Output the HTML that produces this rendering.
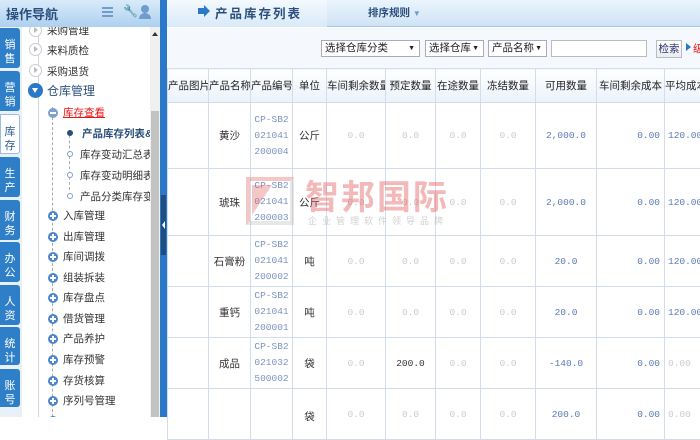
<!DOCTYPE html>
<html><head><meta charset="utf-8"><style>
*{margin:0;padding:0;box-sizing:border-box}
body{width:700px;height:417px;overflow:hidden;background:#fff;font-family:"Liberation Sans","Noto Sans CJK SC",sans-serif;font-size:11px;position:relative;color:#333}
.a{position:absolute;white-space:nowrap}
.tab{position:absolute;left:0;width:20px;background:#2f7fc8;color:#fff;font-size:11px;text-align:center;line-height:14px;padding-top:10px;border-radius:0 3px 3px 0}
.plus{position:absolute;width:10px;height:10px;border-radius:50%;background:#4a87cc}
.plus:after{content:"";position:absolute;left:2px;top:4px;width:6px;height:2px;background:#fff}
.plus:before{content:"";position:absolute;left:4px;top:2px;width:2px;height:6px;background:#fff}
.play{position:absolute;width:13px;height:13px;border-radius:50%;border:1.5px solid #c8ccd6;background:#fff}
.play:after{content:"";position:absolute;left:4px;top:2px;border-left:4px solid #bbb;border-top:3px solid transparent;border-bottom:3px solid transparent}
table{border-collapse:collapse;table-layout:fixed}
td,th{border:1px solid #d3dceb;text-align:center;overflow:hidden;white-space:nowrap}
th{font-size:10.5px;font-weight:normal;color:#222;background:linear-gradient(#fff,#eaf2fb);height:34px}
td{font-family:"Liberation Mono","Noto Sans CJK SC",monospace;font-size:9.5px;color:#ccc}
td.b{color:#5c7bb3}
td.n{font-family:"Liberation Sans","Noto Sans CJK SC",sans-serif;font-size:10.5px;color:#333}
td.code{line-height:16px;color:#7b93c0}
td.r{text-align:right;padding-right:4px}
td.l{text-align:left;padding-left:3px}
.sel{position:absolute;top:40px;height:17px;border:1px solid #aab;background:#fff;font-size:10.5px;line-height:15px;padding-left:3px;color:#222}
.sel span{position:absolute;right:4px;font-size:7px}
</style></head><body>
<div class="a" style="left:0;top:0;width:160px;height:27px;background:linear-gradient(#d9ebfa,#aed0ef);"></div>
<div class="a" style="left:6px;top:4px;font-size:13px;color:#2b4f7c;font-weight:bold">操作导航</div>
<div class="a" style="left:102px;top:7px;width:11px;height:10px;border-top:2px solid #6f9ccc;border-bottom:2px solid #6f9ccc"></div>
<div class="a" style="left:102px;top:11px;width:11px;height:2px;background:#6f9ccc"></div>
<div class="a" style="left:123px;top:4px;font-size:12px;color:#6f9ccc">🔧</div>
<div class="a" style="left:141px;top:5px;width:8px;height:8px;border-radius:50%;background:#6f9ccc"></div>
<div class="a" style="left:139px;top:13px;width:12px;height:6px;border-radius:6px 6px 0 0;background:#6f9ccc"></div>
<div class="a" style="left:0;top:27px;width:22px;height:390px;background:#e8f0f8"></div>
<div class="tab" style="top:28px;height:40px">销<br>售</div>
<div class="tab" style="top:71px;height:40px">营<br>销</div>
<div class="tab" style="top:114px;height:40px;background:#fff;color:#2b5a95;border:1px solid #9bbde0">库<br>存</div>
<div class="tab" style="top:157px;height:40px">生<br>产</div>
<div class="tab" style="top:200px;height:40px">财<br>务</div>
<div class="tab" style="top:242px;height:40px">办<br>公</div>
<div class="tab" style="top:285px;height:40px">人<br>资</div>
<div class="tab" style="top:327px;height:38px">统<br>计</div>
<div class="tab" style="top:369px;height:38px">账<br>号</div>
<div class="a" style="left:22px;top:27px;width:128px;height:390px;background:#fff;overflow:hidden">
 <div class="a" style="left:16px;top:0;width:1px;height:390px;background:#cfd6e0"></div>
 <div class="a" style="left:30px;top:80px;width:0;height:330px;border-left:1px dashed #aaa"></div>
 <div class="a" style="left:47px;top:103px;width:0;height:60px;border-left:1px dashed #aaa"></div>
 <div class="play" style="left:7px;top:-3px"></div><div class="a" style="left:25px;top:-4px;font-size:10.5px">采购管理</div>
 <div class="play" style="left:7px;top:16px"></div><div class="a" style="left:25px;top:16px;font-size:10.5px">来料质检</div>
 <div class="play" style="left:7px;top:37px"></div><div class="a" style="left:25px;top:37px;font-size:10.5px">采购退货</div>
 <div class="a" style="left:6px;top:56px;width:15px;height:15px;border-radius:50%;background:#2a78c8"></div>
 <div class="a" style="left:10px;top:61px;border-top:5px solid #fff;border-left:3.5px solid transparent;border-right:3.5px solid transparent"></div>
 <div class="a" style="left:25px;top:55px;font-size:12px;color:#2b4f7c">仓库管理</div>
 <div class="a" style="left:26px;top:81px;width:10px;height:10px;border-radius:50%;background:#7f9fd0"></div>
 <div class="a" style="left:28px;top:85px;width:6px;height:2px;background:#fff"></div>
 <div class="a" style="left:41px;top:78px;font-size:10.5px;color:#e81515;text-decoration:underline">库存查看</div>
 <div class="a" style="left:45px;top:103px;width:6px;height:6px;border-radius:50%;background:#2b4f7c"></div>
 <div class="a" style="left:60px;top:99px;font-size:10.5px;color:#2b4f7c;font-weight:bold">产品库存列表&amp;</div>
 <div class="a" style="left:45px;top:124px;width:6px;height:6px;border-radius:50%;border:1px solid #7f9fd0;background:#fff"></div>
 <div class="a" style="left:58px;top:120px;font-size:10.5px">库存变动汇总表</div>
 <div class="a" style="left:45px;top:145px;width:6px;height:6px;border-radius:50%;border:1px solid #7f9fd0;background:#fff"></div>
 <div class="a" style="left:58px;top:141px;font-size:10.5px">库存变动明细表</div>
 <div class="a" style="left:45px;top:166px;width:6px;height:6px;border-radius:50%;border:1px solid #7f9fd0;background:#fff"></div>
 <div class="a" style="left:58px;top:162px;font-size:10.5px">产品分类库存变</div>
 <div class="plus" style="left:26px;top:184px"></div><div class="a" style="left:41px;top:181px;font-size:10.5px">入库管理</div>
 <div class="plus" style="left:26px;top:205px"></div><div class="a" style="left:41px;top:202px;font-size:10.5px">出库管理</div>
 <div class="plus" style="left:26px;top:225px"></div><div class="a" style="left:41px;top:222px;font-size:10.5px">库间调拨</div>
 <div class="plus" style="left:26px;top:246px"></div><div class="a" style="left:41px;top:243px;font-size:10.5px">组装拆装</div>
 <div class="plus" style="left:26px;top:266px"></div><div class="a" style="left:41px;top:263px;font-size:10.5px">库存盘点</div>
 <div class="plus" style="left:26px;top:287px"></div><div class="a" style="left:41px;top:284px;font-size:10.5px">借货管理</div>
 <div class="plus" style="left:26px;top:307px"></div><div class="a" style="left:41px;top:304px;font-size:10.5px">产品养护</div>
 <div class="plus" style="left:26px;top:328px"></div><div class="a" style="left:41px;top:325px;font-size:10.5px">库存预警</div>
 <div class="plus" style="left:26px;top:349px"></div><div class="a" style="left:41px;top:346px;font-size:10.5px">存货核算</div>
 <div class="plus" style="left:26px;top:369px"></div><div class="a" style="left:41px;top:366px;font-size:10.5px">序列号管理</div>
 <div class="plus" style="left:26px;top:389px"></div>
</div>
<div class="a" style="left:150px;top:27px;width:10px;height:390px;background:#f0f0f0"></div>
<div class="a" style="left:151px;top:111px;width:8px;height:306px;background:#c3c3c3"></div>
<div class="a" style="left:152px;top:32px;border-bottom:4px solid #333;border-left:3px solid transparent;border-right:3px solid transparent"></div>
<div class="a" style="left:160px;top:0;width:7px;height:417px;background:#2a78c8"></div>
<div class="a" style="left:161px;top:195px;width:5px;height:60px;background:#1f4f80"></div>
<div class="a" style="left:162px;top:221px;border-right:3px solid #fff;border-top:4px solid transparent;border-bottom:4px solid transparent"></div>
<div class="a" style="left:167px;top:0;width:533px;height:27px;background:linear-gradient(#eaf4fd,#cfe3f6);border-bottom:1px solid #a9c8e8"></div>
<div class="a" style="left:167px;top:0;width:160px;height:27px;background:linear-gradient(#f4f9fe,#d8e9f8)"></div>
<div class="a" style="left:198px;top:8px;width:6px;height:6px;background:#2a78c8"></div>
<div class="a" style="left:204px;top:5px;border-left:6px solid #2a78c8;border-top:6px solid transparent;border-bottom:6px solid transparent"></div>
<div class="a" style="left:215px;top:3px;font-size:12.5px;color:#2b4f7c;font-weight:bold;letter-spacing:2px">产品库存列表</div>
<div class="a" style="left:368px;top:5px;font-size:10.5px;color:#2b4f7c;font-weight:bold">排序规则 <span style="color:#6f9ccc;font-size:8px">▼</span></div>
<div class="a" style="left:167px;top:28px;width:533px;height:40px;background:#f5f9fd"></div>
<div class="sel" style="left:321px;width:99px">选择仓库分类<span>▼</span></div>
<div class="sel" style="left:425px;width:59px">选择仓库<span>▼</span></div>
<div class="sel" style="left:488px;width:59px">产品名称<span>▼</span></div>
<div class="sel" style="left:551px;width:96px;border-color:#bbb"></div>
<div class="a" style="left:656px;top:40px;width:26px;height:18px;border:1px solid #bbb;background:linear-gradient(#fff,#e8eef5);font-size:10.5px;line-height:16px;text-align:center;color:#336">检索</div>
<div class="a" style="left:686px;top:43px;border-left:5px solid #2a78c8;border-top:4px solid transparent;border-bottom:4px solid transparent"></div>
<div class="a" style="left:693px;top:41px;font-size:10.5px;color:#e81515">级</div>
<table class="a" style="left:167px;top:68px;width:560px;white-space:normal">
<colgroup><col style="width:41px"><col style="width:42px"><col style="width:42px"><col style="width:34px"><col style="width:59px"><col style="width:50px"><col style="width:45px"><col style="width:55px"><col style="width:61px"><col style="width:68px"><col style="width:63px"></colgroup>
<tr><th>产品图片</th><th>产品名称</th><th>产品编号</th><th>单位</th><th style="text-align:left">车间剩余数量</th><th>预定数量</th><th>在途数量</th><th>冻结数量</th><th>可用数量</th><th>车间剩余成本</th><th style="text-align:left">平均成本</th></tr>
<tr style="height:66px"><td></td><td class="n">黄沙</td><td class="code">CP-SB2<br>021041<br>200004</td><td class="n b">公斤</td><td>0.0</td><td>0.0</td><td>0.0</td><td>0.0</td><td class="b">2,000.0</td><td class="b r">0.00</td><td class="b l">120.00</td></tr>
<tr style="height:67px"><td></td><td class="n">琥珠</td><td class="code">CP-SB2<br>021041<br>200003</td><td class="n b">公斤</td><td>0.0</td><td>0.0</td><td>0.0</td><td>0.0</td><td class="b">2,000.0</td><td class="b r">0.00</td><td class="b l">120.00</td></tr>
<tr style="height:51px"><td></td><td class="n">石膏粉</td><td class="code">CP-SB2<br>021041<br>200002</td><td class="n b">吨</td><td>0.0</td><td>0.0</td><td>0.0</td><td>0.0</td><td class="b">20.0</td><td class="b r">0.00</td><td class="b l">120.00</td></tr>
<tr style="height:51px"><td></td><td class="n">重钙</td><td class="code">CP-SB2<br>021041<br>200001</td><td class="n b">吨</td><td>0.0</td><td>0.0</td><td>0.0</td><td>0.0</td><td class="b">20.0</td><td class="b r">0.00</td><td class="b l">120.00</td></tr>
<tr style="height:51px"><td></td><td class="n">成品</td><td class="code">CP-SB2<br>021032<br>500002</td><td class="n b">袋</td><td>0.0</td><td style="color:#333">200.0</td><td>0.0</td><td>0.0</td><td class="b">-140.0</td><td class="b r">0.00</td><td class="l">0.00</td></tr>
<tr style="height:51px;vertical-align:top"><td></td><td></td><td></td><td class="n b" style="padding-top:20px">袋</td><td style="padding-top:20px">0.0</td><td style="padding-top:20px">0.0</td><td style="padding-top:20px">0.0</td><td style="padding-top:20px">0.0</td><td class="b" style="padding-top:20px">200.0</td><td class="b r" style="padding-top:20px">0.00</td><td class="l" style="padding-top:20px">0.00</td></tr>
</table>
<div class="a" style="left:246px;top:177px;width:48px;height:48px;opacity:.35">
 <div class="a" style="left:0;top:0;width:48px;height:48px;border:4px solid #e06060;border-right-color:#bbb;border-bottom-color:#bbb"></div>
 <div class="a" style="left:6px;top:8px;border-left:20px solid #e06060;border-bottom:30px solid transparent"></div>
</div>
<div class="a" style="left:305px;top:170px;font-size:34px;color:rgba(225,80,80,.4);letter-spacing:2px;font-weight:bold">智邦国际</div>
<div class="a" style="left:308px;top:214px;font-size:9px;color:rgba(150,150,150,.45);letter-spacing:5px">企业管理软件领导品牌</div>
</body></html>
